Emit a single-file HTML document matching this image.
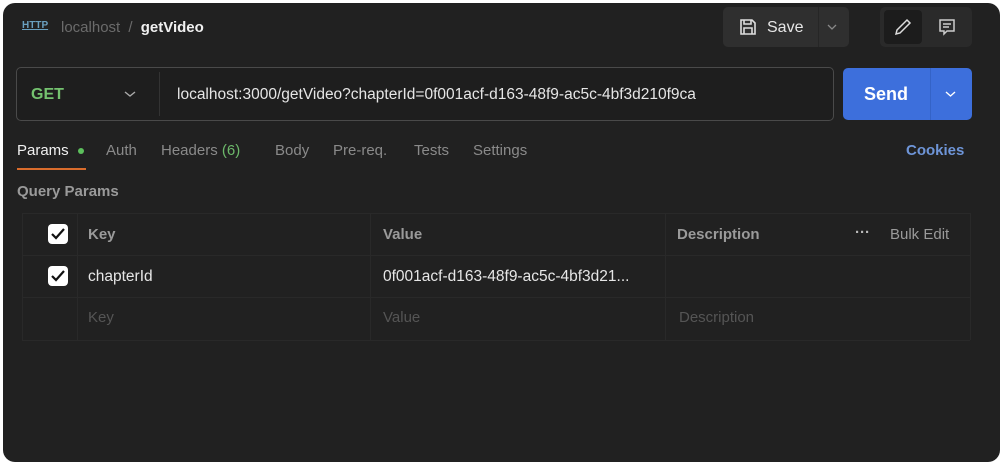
<!DOCTYPE html>
<html><head><style>
*{margin:0;padding:0;box-sizing:border-box}
body{width:1008px;height:468px;background:#fff;font-family:"Liberation Sans",sans-serif;position:relative;overflow:hidden}
.p{position:absolute;left:3px;top:3px;width:997px;height:459px;background:#212121;border-radius:12px}
.a{position:absolute;white-space:nowrap}
.t{font-size:15px;color:#8a8a8a;top:142px}
.cb{position:absolute;width:20px;height:20px;background:#fff;border-radius:4px}
.cb svg{position:absolute;left:3px;top:4px}
.hl{position:absolute;height:1px;background:#292929}
.vl{position:absolute;width:1px;background:#292929}
</style></head><body>
<div class="p"></div>
<div class="a" style="left:22px;top:20px;font-size:10px;color:#6aa0c0;font-weight:bold;text-decoration:underline">HTTP</div>
<div class="a" style="left:61px;top:19px;font-size:15px;color:#6b6b6b">localhost <span style="margin:0 4px">/</span> <span style="color:#f0f0f0;font-weight:bold">getVideo</span></div>
<div class="a" style="left:723px;top:7px;width:126px;height:40px;background:#2f2f2f;border-radius:5px"></div>
<div class="a" style="left:818px;top:7px;width:1px;height:40px;background:#262626"></div>
<svg class="a" style="left:738px;top:17px" width="20" height="20" viewBox="0 0 20 20" fill="none" stroke="#ddd" stroke-width="1.6"><path d="M3 3h11l3 3v11H3z"/><path d="M6 3v4h7V3M6 17v-6h8v6"/></svg>
<div class="a" style="left:767px;top:19px;font-size:16px;color:#e6e6e6">Save</div>
<svg class="a" style="left:827px;top:23px" width="10" height="8" viewBox="0 0 10 8" fill="none" stroke="#888" stroke-width="1.3"><path d="M1 2l4 4 4-4"/></svg>
<div class="a" style="left:880px;top:7px;width:92px;height:40px;background:#2a2a2a;border-radius:5px"></div>
<div class="a" style="left:884px;top:10px;width:38px;height:34px;background:#1c1c1c;border-radius:4px"></div>
<svg class="a" style="left:893px;top:17px" width="20" height="20" viewBox="0 0 20 20" fill="none" stroke="#ddd" stroke-width="1.5"><path d="M3 17l1-4L14 3l3 3L7 16z"/></svg>
<svg class="a" style="left:937px;top:17px" width="20" height="20" viewBox="0 0 20 20" fill="none" stroke="#ccc" stroke-width="1.5"><path d="M3 3h14v11h-7l-3 3v-3H3z M6 7h8M6 10h6"/></svg>
<div class="a" style="left:16px;top:67px;width:818px;height:54px;border:1px solid #4a4a4a;border-radius:5px;background:#1e1e1e"></div>
<div class="a" style="left:159px;top:72px;width:1px;height:44px;background:#333"></div>
<div class="a" style="left:31px;top:86px;font-size:16px;color:#74c26f;font-weight:bold">GET</div>
<svg class="a" style="left:124px;top:90px" width="12" height="8" viewBox="0 0 12 8" fill="none" stroke="#aaa" stroke-width="1.4"><path d="M1 2l5 4 5-4"/></svg>
<div class="a" style="left:177px;top:86px;font-size:15.5px;color:#e6e6e6">localhost:3000/getVideo?chapterId=0f001acf-d163-48f9-ac5c-4bf3d210f9ca</div>
<div class="a" style="left:843px;top:68px;width:129px;height:52px;background:#3d6fdc;border-radius:5px"></div>
<div class="a" style="left:930px;top:68px;width:1px;height:52px;background:#3463c7"></div>
<div class="a" style="left:864px;top:84px;font-size:18px;color:#fff;font-weight:bold">Send</div>
<svg class="a" style="left:945px;top:90px" width="11" height="8" viewBox="0 0 11 8" fill="none" stroke="#fff" stroke-width="1.4"><path d="M1 2l4.5 4 4.5-4"/></svg>
<div class="a t" style="left:17px;color:#f0f0f0">Params</div>
<div class="a" style="left:78px;top:148px;width:6px;height:6px;border-radius:50%;background:#5cbf5c"></div>
<div class="a" style="left:17px;top:168px;width:69px;height:2px;background:#d96c2c"></div>
<div class="a t" style="left:106px">Auth</div>
<div class="a t" style="left:161px">Headers <span style="color:#6cb86a">(6)</span></div>
<div class="a t" style="left:275px">Body</div>
<div class="a t" style="left:333px">Pre-req.</div>
<div class="a t" style="left:414px">Tests</div>
<div class="a t" style="left:473px">Settings</div>
<div class="a t" style="left:906px;color:#6e95d8;font-weight:bold">Cookies</div>
<div class="a" style="left:17px;top:183px;font-size:15px;color:#9a9a9a;font-weight:bold">Query Params</div>
<div class="hl" style="left:22px;top:213px;width:948px"></div>
<div class="hl" style="left:22px;top:255px;width:948px"></div>
<div class="hl" style="left:22px;top:297px;width:948px"></div>
<div class="hl" style="left:22px;top:340px;width:948px"></div>
<div class="vl" style="left:22px;top:213px;height:127px"></div>
<div class="vl" style="left:77px;top:213px;height:127px"></div>
<div class="vl" style="left:370px;top:213px;height:127px"></div>
<div class="vl" style="left:665px;top:213px;height:127px"></div>
<div class="vl" style="left:970px;top:213px;height:127px"></div>
<div class="cb" style="left:48px;top:224px"><svg width="14" height="12" viewBox="0 0 14 12" fill="none" stroke="#111" stroke-width="2.2"><path d="M1 6l4 4 8-9"/></svg></div>
<div class="cb" style="left:48px;top:266px"><svg width="14" height="12" viewBox="0 0 14 12" fill="none" stroke="#111" stroke-width="2.2"><path d="M1 6l4 4 8-9"/></svg></div>
<div class="a" style="left:88px;top:226px;font-size:15px;color:#9a9a9a;font-weight:bold">Key</div>
<div class="a" style="left:383px;top:226px;font-size:15px;color:#9a9a9a;font-weight:bold">Value</div>
<div class="a" style="left:677px;top:226px;font-size:15px;color:#9a9a9a;font-weight:bold">Description</div>
<div class="a" style="left:855px;top:224px;font-size:15px;color:#bbb;font-weight:bold">···</div>
<div class="a" style="left:890px;top:226px;font-size:15px;color:#9a9a9a">Bulk Edit</div>
<div class="a" style="left:88px;top:268px;font-size:15.5px;color:#e6e6e6">chapterId</div>
<div class="a" style="left:383px;top:268px;font-size:15.5px;color:#e6e6e6">0f001acf-d163-48f9-ac5c-4bf3d21...</div>
<div class="a" style="left:88px;top:309px;font-size:15px;color:#555">Key</div>
<div class="a" style="left:383px;top:309px;font-size:15px;color:#555">Value</div>
<div class="a" style="left:679px;top:309px;font-size:15px;color:#555">Description</div>
</body></html>
